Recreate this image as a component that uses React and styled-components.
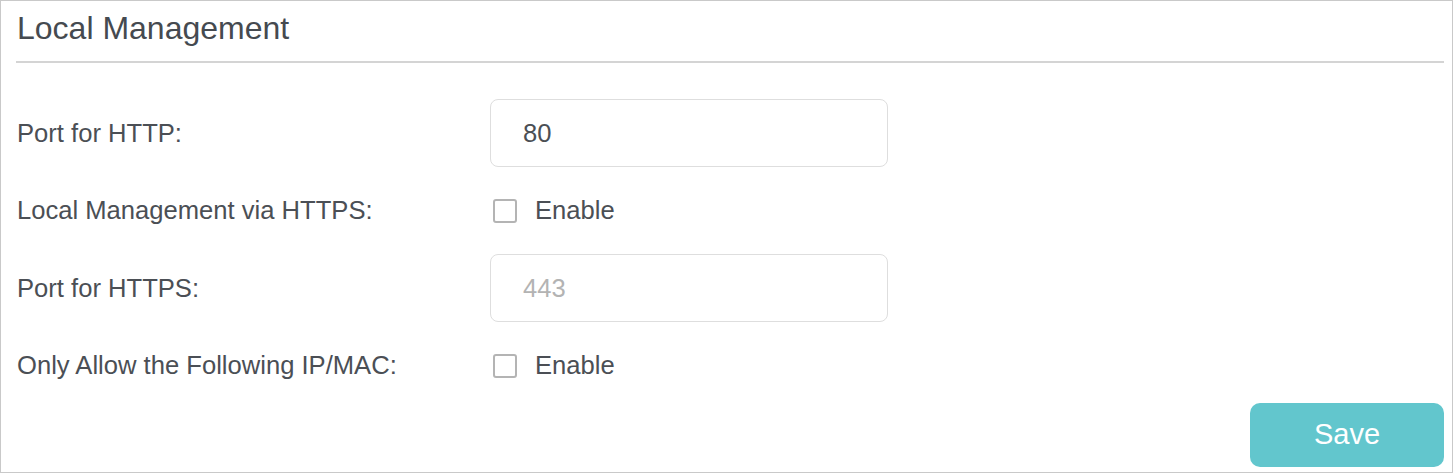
import React from "react";
import styled, { createGlobalStyle } from "styled-components";

const Global = createGlobalStyle`
  html, body { margin: 0; padding: 0; background: #ffffff; }
  body { font-family: "Liberation Sans", Arial, sans-serif; }
  * { box-sizing: border-box; }
`;

const Panel = styled.section`
  width: 1453px;
  border: 1px solid #c9c9c9;
  background: #ffffff;
  padding: 8px 8px 5px 15px;
  display: flex;
  flex-direction: column;
`;

const Title = styled.h2`
  margin: 0 0 0 1px;
  font-size: 32px;
  line-height: 38px;
  font-weight: 400;
  color: #454a50;
`;

const Divider = styled.hr`
  margin: 14px 0 36px 0;
  border: 0;
  height: 2px;
  background: #d4d4d4;
`;

const Form = styled.div`
  display: flex;
  flex-direction: column;
  gap: 9.5px;
`;

const Row = styled.div`
  display: grid;
  grid-template-columns: 474px 1fr;
  align-items: center;
  height: 68px;
`;

const Label = styled.label`
  padding-left: 1px;
  font-size: 25.6px;
  color: #4b4f55;
`;

const Input = styled.input`
  width: 398px;
  height: 68px;
  border: 1px solid #dedede;
  border-radius: 8px;
  background: #ffffff;
  padding: 0 0 0 32px;
  font-family: "Liberation Sans", Arial, sans-serif;
  font-size: 25.6px;
  color: ${(p) => (p.disabled ? "#b3b3b3" : "#4b4f55")};
  -webkit-text-fill-color: ${(p) => (p.disabled ? "#b3b3b3" : "#4b4f55")};
  outline: none;
  opacity: 1;
`;

const CheckWrap = styled.label`
  display: flex;
  align-items: center;
  gap: 18px;
  padding-left: 3px;
  font-size: 25.6px;
  color: #4b4f55;
`;

const Box = styled.span`
  width: 24px;
  height: 24px;
  border: 2px solid #b4b4b4;
  border-radius: 3px;
  background: #ffffff;
`;

const Footer = styled.div`
  display: flex;
  justify-content: flex-end;
  margin-top: 3px;
`;

const SaveButton = styled.button`
  width: 194px;
  height: 64px;
  border: 0;
  border-radius: 10px;
  background: #62c6cd;
  color: #ffffff;
  font-family: "Liberation Sans", Arial, sans-serif;
  font-size: 29px;
  cursor: pointer;
`;

function Checkbox({ text }) {
  return (
    <CheckWrap>
      <Box />
      {text}
    </CheckWrap>
  );
}

export default function App() {
  return (
    <>
      <Global />
      <Panel>
        <Title>Local Management</Title>
        <Divider />
        <Form>
          <Row>
            <Label>Port for HTTP:</Label>
            <Input defaultValue="80" />
          </Row>
          <Row>
            <Label>Local Management via HTTPS:</Label>
            <Checkbox text="Enable" />
          </Row>
          <Row>
            <Label>Port for HTTPS:</Label>
            <Input defaultValue="443" disabled />
          </Row>
          <Row>
            <Label>Only Allow the Following IP/MAC:</Label>
            <Checkbox text="Enable" />
          </Row>
        </Form>
        <Footer>
          <SaveButton>Save</SaveButton>
        </Footer>
      </Panel>
    </>
  );
}
